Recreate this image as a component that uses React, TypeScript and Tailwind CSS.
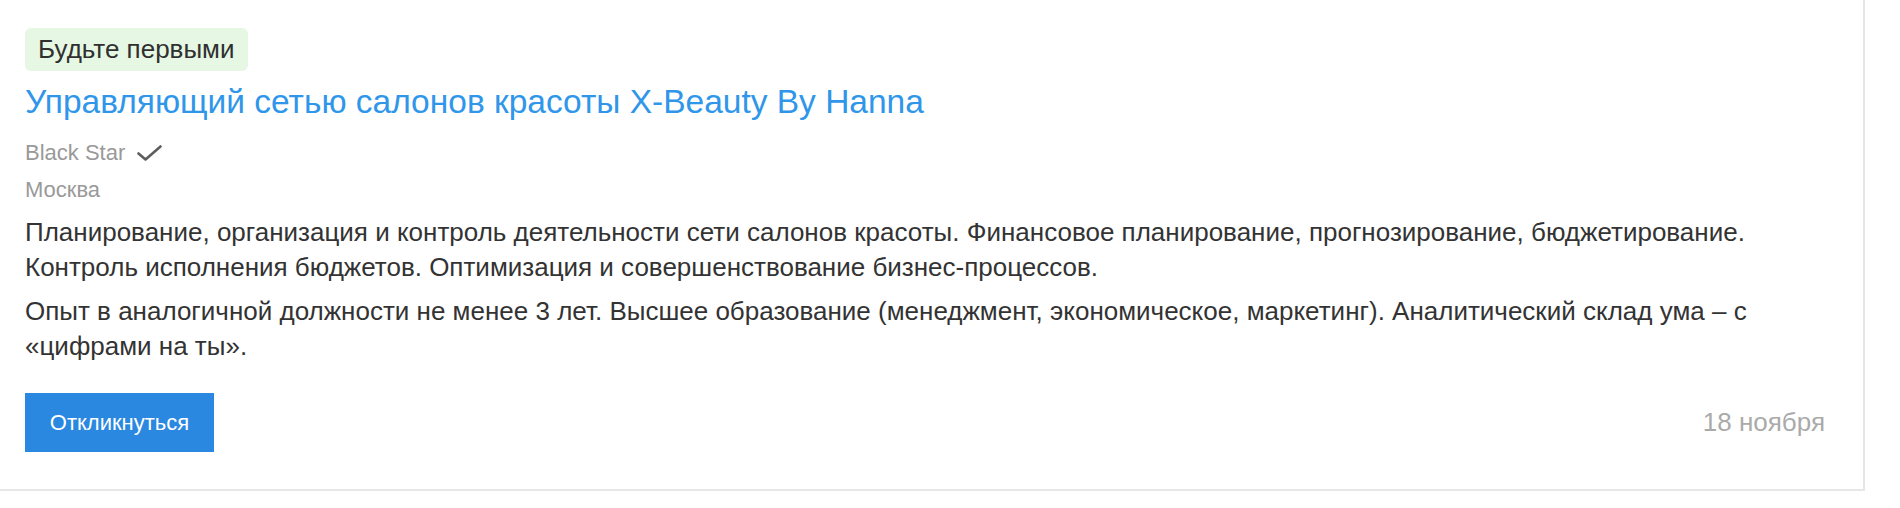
import React from 'react';

function CheckMark() {
  return (
    <svg width="25" height="16" viewBox="0 0 25 16" fill="none" className="ml-[12px] shrink-0">
      <polyline points="1.5,8.5 8.5,14.5 23.5,1.5" stroke="#5e5e5e" strokeWidth="2.6" strokeLinecap="round" strokeLinejoin="round" />
    </svg>
  );
}

function VacancyCard() {
  return (
    <div className="w-[1865px] bg-white border-r-2 border-b-2 border-[#e6e6e6] pl-[25px] pr-[38px] pt-[28px] pb-[37px] font-['Liberation_Sans',Arial,sans-serif]">
      {/* Badge */}
      <div className="inline-flex h-[43px] items-center rounded-[6px] bg-[#e6f8e4] px-[13px] text-[26px] text-[#303030]">
        Будьте первыми
      </div>

      {/* Title */}
      <div className="mt-[12px] text-[33.5px] leading-[38px] text-[#2f96ea]">
        <a href="#" className="hover:underline">Управляющий сетью салонов красоты X-Beauty By Hanna</a>
      </div>

      {/* Company + city */}
      <div className="mt-[13px] text-[22px] leading-[37px] text-[#999999]">
        <div className="flex items-center">
          <span>Black Star</span>
          <CheckMark />
        </div>
        <div>Москва</div>
      </div>

      {/* Description */}
      <div className="mt-[7px] text-[26px] leading-[35px] text-[#333333]">
        <div>
          Планирование, организация и контроль деятельности сети салонов красоты. Финансовое планирование, прогнозирование, бюджетирование. Контроль исполнения бюджетов. Оптимизация и совершенствование бизнес-процессов.
        </div>
        <div className="mt-[9px]">
          Опыт в аналогичной должности не менее 3 лет. Высшее образование (менеджмент, экономическое, маркетинг). Аналитический склад ума – с «цифрами на ты».
        </div>
      </div>

      {/* Footer */}
      <div className="mt-[29px] flex items-center justify-between">
        <button className="h-[59px] w-[189px] bg-[#2a88e1] text-[22px] text-white">
          Откликнуться
        </button>
        <span className="text-[26px] text-[#aaaaaa]">18 ноября</span>
      </div>
    </div>
  );
}

export default function App() {
  return (
    <div className="min-h-[508px] bg-white">
      <VacancyCard />
    </div>
  );
}
